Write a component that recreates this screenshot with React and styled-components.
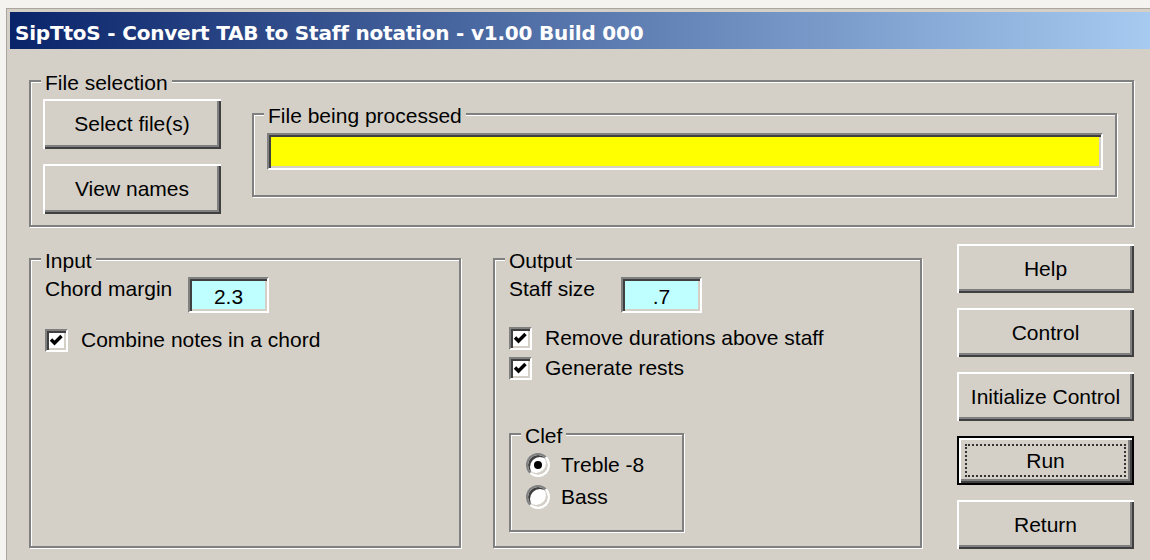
import React from "react";
import styled, { createGlobalStyle } from "styled-components";

const GlobalStyle = createGlobalStyle`
  html, body {
    margin: 0;
    padding: 0;
  }
  body {
    background: #d4d0c8;
    font-family: "Liberation Sans", Arial, sans-serif;
    font-size: 21px;
    color: #000;
  }
  * {
    box-sizing: border-box;
  }
`;

const Window = styled.div`
  width: 1150px;
  height: 560px;
  overflow: hidden;
  background: #f4f3ef;
  padding: 8px 0 0 6px;
`;

const Frame = styled.div`
  height: 100%;
  background: #d4d0c8;
  border-top: 1px solid #aaa69e;
  border-left: 1px solid #aaa69e;
  padding: 3px 0 0 3px;
`;

const TitleBar = styled.div`
  height: 37px;
  display: flex;
  align-items: center;
  padding: 4px 0 0 5px;
  background: linear-gradient(to right, #0a246a, #a6caf0);
  color: #fff;
  font-family: "DejaVu Sans", Verdana, sans-serif;
  font-weight: bold;
  font-size: 20px;
  letter-spacing: -0.2px;
  white-space: nowrap;
`;

const Body = styled.div`
  padding: 31px 0 0 19px;
`;

// etched frame with a caption sitting on its top edge
const Group = styled.div`
  position: relative;
  width: ${(p) => p.$w}px;
  height: ${(p) => p.$h}px;
  margin-top: ${(p) => p.$mt || 0}px;
  margin-left: ${(p) => p.$ml || 0}px;
  padding: ${(p) => p.$pad || "0"};
  border: 2px solid #808080;
  box-shadow: inset 1px 1px 0 #fff, 1px 1px 0 #fff;
`;

const Caption = styled.span`
  position: absolute;
  top: -11px;
  left: 10px;
  padding: 0 4px;
  line-height: 24px;
  background: #d4d0c8;
  white-space: nowrap;
`;

const FileRow = styled.div`
  display: flex;
  align-items: flex-start;
  gap: 31px;
`;

const ButtonColumn = styled.div`
  display: flex;
  flex-direction: column;
  gap: ${(p) => p.$gap}px;
  width: ${(p) => p.$w}px;
  margin-left: ${(p) => p.$ml || 0}px;
`;

const Button = styled.button`
  height: ${(p) => p.$h}px;
  width: 100%;
  display: flex;
  padding: ${(p) => (p.$default ? "6px" : "8px")};
  background: #d4d0c8;
  font: inherit;
  color: #000;
  border: ${(p) => (p.$default ? "2px solid #000" : "none")};
  box-shadow: inset 2px 2px 0 #fff, inset -2px -2px 0 #404040,
    inset -4px -4px 0 #808080;
`;

const ButtonFace = styled.span`
  flex: 1;
  display: flex;
  align-items: center;
  justify-content: center;
  border: 2px dotted ${(p) => (p.$focus ? "#333" : "transparent")};
  line-height: 24px;
  white-space: nowrap;
`;

const Sunken = styled.div`
  width: ${(p) => p.$w}px;
  height: ${(p) => p.$h}px;
  display: flex;
  align-items: center;
  justify-content: center;
  padding-top: 3px;
  background: ${(p) => p.$bg};
  border: 2px solid;
  border-color: #808080 #fff #fff #808080;
  box-shadow: inset 2px 2px 0 #404040, inset -2px -2px 0 #d4d0c8;
`;

const FieldRow = styled.div`
  display: flex;
  align-items: flex-start;
`;

const Label = styled.span`
  width: ${(p) => p.$w}px;
  line-height: 24px;
  white-space: nowrap;
`;

const OptionRow = styled.label`
  display: flex;
  align-items: center;
  gap: ${(p) => p.$gap}px;
  height: 24px;
  margin-top: ${(p) => p.$mt || 0}px;
  line-height: 24px;
  white-space: nowrap;
`;

const CheckBox = styled.span`
  width: 23px;
  height: 23px;
  flex: none;
  display: flex;
  align-items: center;
  justify-content: center;
  background: #fff;
  border: 2px solid;
  border-color: #808080 #fff #fff #808080;
  box-shadow: inset 2px 2px 0 #404040, inset -2px -2px 0 #d4d0c8;
`;

const Radio = styled.span`
  width: 24px;
  height: 24px;
  flex: none;
  display: flex;
  align-items: center;
  justify-content: center;
  border-radius: 50%;
  background: #fff;
  border: 2px solid;
  border-color: #808080 #fff #fff #808080;
  box-shadow: inset 2px 2px 0 #404040, inset -2px -2px 0 #d4d0c8;
`;

const RadioDot = styled.span`
  width: 8px;
  height: 8px;
  border-radius: 50%;
  background: #000;
`;

const LowerRow = styled.div`
  display: flex;
  align-items: flex-start;
  margin-top: 17px;
`;

const Check = () => (
  <CheckBox>
    <svg width="15" height="15" viewBox="0 0 15 15">
      <polyline
        points="2,6.5 5.5,10 12.5,3"
        fill="none"
        stroke="#000"
        strokeWidth="3.4"
      />
    </svg>
  </CheckBox>
);

const App = () => {
  return (
    <>
      <GlobalStyle />
      <Window>
        <Frame>
          <TitleBar>SipTtoS - Convert TAB to Staff notation - v1.00 Build 000</TitleBar>
          <Body>
            <Group $w={1105} $h={147} $pad="17px 15px 0 12px">
              <Caption>File selection</Caption>
              <FileRow>
                <ButtonColumn $w={178} $gap={15}>
                  <Button $h={50}>
                    <ButtonFace>Select file(s)</ButtonFace>
                  </Button>
                  <Button $h={50}>
                    <ButtonFace>View names</ButtonFace>
                  </Button>
                </ButtonColumn>
                <Group $w={865} $h={84} $mt={14} $pad="18px 12px 0 13px">
                  <Caption>File being processed</Caption>
                  <Sunken $w={836} $h={37} $bg="#ffff00" />
                </Group>
              </FileRow>
            </Group>

            <LowerRow>
              <Group $w={432} $h={290} $mt={14} $pad="17px 0 0 14px">
                <Caption>Input</Caption>
                <FieldRow>
                  <Label $w={143}>Chord margin</Label>
                  <Sunken $w={81} $h={36} $bg="#c0ffff">2.3</Sunken>
                </FieldRow>
                <OptionRow $mt={15} $gap={13}>
                  <Check />
                  Combine notes in a chord
                </OptionRow>
              </Group>

              <Group $w={429} $h={290} $mt={14} $ml={32} $pad="17px 0 0 14px">
                <Caption>Output</Caption>
                <FieldRow>
                  <Label $w={112}>Staff size</Label>
                  <Sunken $w={81} $h={36} $bg="#c0ffff">.7</Sunken>
                </FieldRow>
                <OptionRow $mt={13} $gap={13}>
                  <Check />
                  Remove durations above staff
                </OptionRow>
                <OptionRow $mt={6} $gap={13}>
                  <Check />
                  Generate rests
                </OptionRow>
                <Group $w={175} $h={99} $mt={53} $pad="18px 0 0 15px">
                  <Caption>Clef</Caption>
                  <OptionRow $gap={11}>
                    <Radio>
                      <RadioDot />
                    </Radio>
                    Treble -8
                  </OptionRow>
                  <OptionRow $mt={8} $gap={11}>
                    <Radio />
                    Bass
                  </OptionRow>
                </Group>
              </Group>

              <ButtonColumn $w={177} $gap={15} $ml={35}>
                <Button $h={49}>
                  <ButtonFace>Help</ButtonFace>
                </Button>
                <Button $h={49}>
                  <ButtonFace>Control</ButtonFace>
                </Button>
                <Button $h={49}>
                  <ButtonFace>Initialize Control</ButtonFace>
                </Button>
                <Button $h={49} $default>
                  <ButtonFace $focus>Run</ButtonFace>
                </Button>
                <Button $h={49}>
                  <ButtonFace>Return</ButtonFace>
                </Button>
              </ButtonColumn>
            </LowerRow>
          </Body>
        </Frame>
      </Window>
    </>
  );
};

export default App;
